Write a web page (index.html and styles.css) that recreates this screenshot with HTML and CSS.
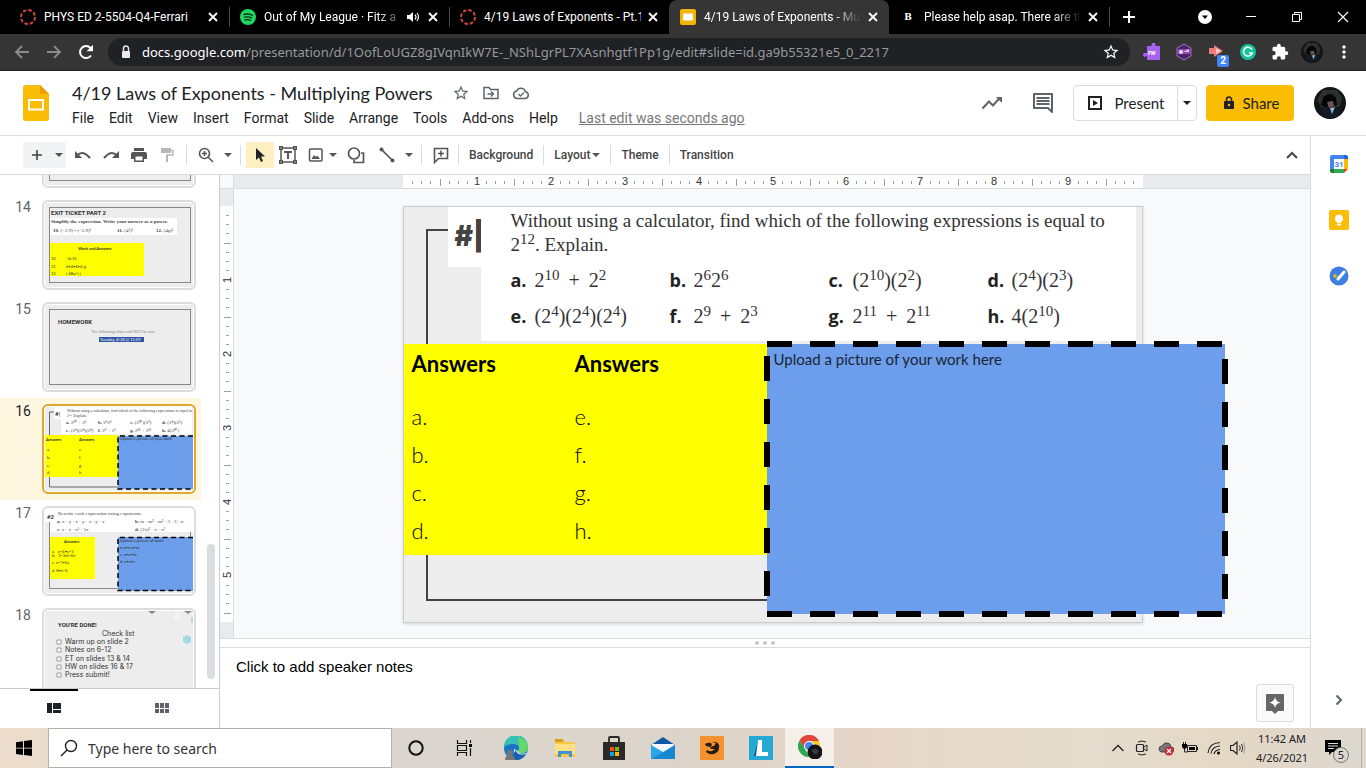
FILE: index.html
```html
<!DOCTYPE html>
<html lang="en">
<head>
<meta charset="utf-8">
<title>4/19 Laws of Exponents - Multiplying Powers</title>
<link rel="stylesheet" href="styles.css">
</head>
<body>
<svg class="defs" width="0" height="0" aria-hidden="true">
  <defs>
    <symbol id="i-x" viewBox="0 0 16 16"><path d="M4 4l8 8M12 4l-8 8" stroke="currentColor" stroke-width="1.8" fill="none"/></symbol>
    <symbol id="i-caret" viewBox="0 0 8 4"><path d="M0 0h8L4 4z" fill="currentColor"/></symbol>
    <symbol id="i-ring" viewBox="0 0 16 16"><circle cx="8" cy="8" r="7" fill="none" stroke="#d0473c" stroke-width="2" stroke-dasharray="3.6 1.9"/></symbol>
    <symbol id="i-star" viewBox="0 0 24 24"><path fill="currentColor" d="M22 9.24l-7.19-.62L12 2 9.19 8.63 2 9.24l5.46 4.73L5.82 21 12 17.27 18.18 21l-1.63-7.03L22 9.24zM12 15.4l-3.76 2.27 1-4.28-3.32-2.88 4.38-.38L12 6.1l1.71 4.04 4.38.38-3.32 2.88 1 4.28L12 15.4z"/></symbol>
    <symbol id="i-avatar" viewBox="0 0 32 32"><circle cx="16" cy="16" r="16" fill="#141416"/><path d="M9 3h14l5 8-2 9H7l-4-7z" fill="#2a312f"/><path d="M9 11q7-8 13 0l1 7-12 2-4-2z" fill="#050507"/><path d="M13 15l6-1 1 5-5 2z" fill="#6a5653"/><path d="M7 20l8 1 5-2 6 4-2 6-9 3-7-3z" fill="#141a28"/><path d="M16 21l5-1-3 7z" fill="#8fb6d6"/></symbol>
    <pattern id="h-ticks" width="74" height="14" patternUnits="userSpaceOnUse"><path d="M9.5 6v3M18.500 6v3M27.500 6v3M46.500 6v3M55.500 6v3M64.500 6v3" stroke="#9aa0a6"/><path d="M37.500 4v7" stroke="#9aa0a6"/></pattern>
    <pattern id="v-ticks" width="14" height="74" patternUnits="userSpaceOnUse"><path d="M6 9.500h3M6 18.500h3M6 27.500h3M6 46.500h3M6 55.500h3M6 64.500h3" stroke="#9aa0a6"/><path d="M4 37.500h7" stroke="#9aa0a6"/></pattern>
  </defs>
</svg>

<header class="browser">
  <div class="tabstrip">
    <div class="tab"><svg class="i16"><use href="#i-ring"/></svg><span class="tab-title">PHYS ED 2-5504-Q4-Ferrari</span><button class="tab-close" aria-label="Close tab"><svg class="i16"><use href="#i-x"/></svg></button></div>
    <div class="tab divided"><svg class="i16" viewBox="0 0 16 16"><circle cx="8" cy="8" r="8" fill="#1ed760"/><path d="M3.500 5.500q5-1.500 9.500 1M4 8.300q4-1.200 8 .8M4.500 11q3.500-1 6.500.7" fill="none" stroke="#0b2a15" stroke-width="1.400"/></svg><span class="tab-title fade">Out of My League · Fitz a</span><svg class="i16" viewBox="0 0 16 16"><path d="M2 6h2.500L8 3v10L4.500 10H2z" fill="#fff"/><path d="M10 5.500q2 2.500 0 5M12 4q3 4 0 8" stroke="#fff" fill="none" stroke-width="1.200"/></svg><button class="tab-close" aria-label="Close tab"><svg class="i16"><use href="#i-x"/></svg></button></div>
    <div class="tab divided"><svg class="i16"><use href="#i-ring"/></svg><span class="tab-title">4/19 Laws of Exponents - Pt.1</span><button class="tab-close" aria-label="Close tab"><svg class="i16"><use href="#i-x"/></svg></button></div>
    <div class="tab active"><svg class="i16" viewBox="0 0 16 16"><rect y="0" width="16" height="16" rx="2" fill="#f4b400"/><rect x="3" y="4.500" width="10" height="7" fill="#fff"/></svg><span class="tab-title fade">4/19 Laws of Exponents - Mu</span><button class="tab-close" aria-label="Close tab"><svg class="i16"><use href="#i-x"/></svg></button></div>
    <div class="tab"><span class="fav-b">B</span><span class="tab-title fade">Please help asap. There are th</span><button class="tab-close" aria-label="Close tab"><svg class="i16"><use href="#i-x"/></svg></button></div>
    <button class="new-tab" aria-label="New tab"><svg class="i16" viewBox="0 0 16 16"><path d="M8 2v12M2 8h12" stroke="#fff" stroke-width="2"/></svg></button>
    <div class="window-buttons">
      <button aria-label="Tab search"><svg class="i16" viewBox="0 0 16 16"><circle cx="8" cy="8" r="7" fill="#fff"/><path d="M5 6.500h6L8 10z"/></svg></button>
      <button aria-label="Minimize"><svg class="i16" viewBox="0 0 16 16"><path d="M3 7.500h10" stroke="#fff"/></svg></button>
      <button aria-label="Restore"><svg class="i16" viewBox="0 0 16 16"><path d="M3.500 5.500h7v7h-7zM5.500 5.500v-2h7v7h-2" stroke="#fff" fill="none"/></svg></button>
      <button aria-label="Close"><svg class="i16" viewBox="0 0 16 16"><path d="M3 3l10 10M13 3L3 13" stroke="#fff" stroke-width="1.200"/></svg></button>
    </div>
  </div>
  <div class="addressbar">
    <button aria-label="Back"><svg class="i16" viewBox="0 0 16 16"><path d="M15 8H2M8 2L2 8l6 6" stroke="#8b8b8b" fill="none" stroke-width="1.800"/></svg></button>
    <button aria-label="Forward"><svg class="i16" viewBox="0 0 16 16"><path d="M1 8h13M8 2l6 6-6 6" stroke="#8b8b8b" fill="none" stroke-width="1.800"/></svg></button>
    <button aria-label="Reload"><svg class="i16" viewBox="0 0 16 16"><path d="M13 11.500A6 6 0 1 1 12.500 4" stroke="#fff" fill="none" stroke-width="2"/><path d="M15 .8v6.400H8.600z" fill="#fff"/></svg></button>
    <div class="omnibox">
      <svg class="i16" viewBox="0 0 16 16"><rect x="4" y="7" width="8" height="7" rx="1" fill="#e8eaed"/><path d="M5.500 7V4.500a2.500 2.500 0 0 1 5 0V7" stroke="#e8eaed" stroke-width="1.500" fill="none"/></svg>
      <span class="url"><b>docs.google.com</b>/presentation/d/1OofLoUGZ8gIVqnIkW7E-_NShLgrPL7XAsnhgtf1Pp1g/edit#slide=id.ga9b55321e5_0_2217</span>
      <button class="bookmark" aria-label="Bookmark"><svg class="i18"><use href="#i-star"/></svg></button>
    </div>
    <div class="extensions">
      <button aria-label="Read Write"><svg class="i18" viewBox="0 0 18 18"><path d="M4 3h5a2 2 0 1 1 3 0h5v14H4v-5a2 2 0 1 1-3-2h3z" fill="#a463f2"/><text x="5" y="12" class="rw">rw</text></svg></button>
      <button aria-label="Extension"><svg class="i18" viewBox="0 0 18 18"><path d="M9 1l7 4v8l-7 4-7-4V5z" fill="#4c2467" stroke="#a86bc9"/><path d="M2.500 6h13v5h-13z" fill="#8a4fae"/><circle cx="6" cy="9" r="2" fill="#f0d9fa"/><path d="M8 9l6-3v3z" fill="#e3bff5"/></svg></button>
      <button class="has-badge" aria-label="Extension, 2 alerts"><svg class="i18" viewBox="0 0 18 18"><path d="M2 5h5V2l9 6-9 6v-3H2z" fill="#ee7c78"/><path d="M9 5l5 3-5 3z" fill="#fff" opacity=".6"/></svg><span class="badge">2</span></button>
      <button aria-label="Grammarly"><svg class="i18" viewBox="0 0 18 18"><circle cx="9" cy="9" r="8" fill="#15c39a"/><path d="M13 6.500A4.500 4.500 0 1 0 13.300 10H10" fill="none" stroke="#fff" stroke-width="1.600"/></svg></button>
      <button aria-label="Extensions"><svg class="i18" viewBox="0 0 24 24"><path fill="#fff" d="M20.500 11H19V7a2 2 0 0 0-2-2h-4V3.500a2.500 2.500 0 0 0-5 0V5H4a2 2 0 0 0-2 2v3.800h1.500a2.700 2.700 0 0 1 0 5.400H2V20a2 2 0 0 0 2 2h3.800v-1.500a2.700 2.700 0 0 1 5.400 0V22H17a2 2 0 0 0 2-2v-4h1.500a2.500 2.500 0 0 0 0-5z"/></svg></button>
      <button aria-label="Profile"><svg class="i22"><use href="#i-avatar"/></svg></button>
      <button aria-label="Menu"><svg class="i16" viewBox="0 0 16 16"><g fill="#fff"><circle cx="8" cy="3" r="1.700"/><circle cx="8" cy="8" r="1.700"/><circle cx="8" cy="13" r="1.700"/></g></svg></button>
    </div>
  </div>
</header>

<section class="docbar">
  <svg class="logo" viewBox="0 0 26 36"><path d="M3 0h14l9 9v24a3 3 0 0 1-3 3H3a3 3 0 0 1-3-3V3a3 3 0 0 1 3-3z" fill="#fbbc04"/><path d="M17 0l9 9h-9z" fill="#e8a100"/><rect x="6" y="15" width="14" height="9.500" fill="none" stroke="#fff" stroke-width="2"/></svg>
  <div class="doc-meta">
    <div class="title-row">
      <h1>4/19 Laws of Exponents - Multiplying Powers</h1>
      <button aria-label="Star"><svg class="i18"><use href="#i-star"/></svg></button>
      <button aria-label="Move"><svg class="i18" viewBox="0 0 18 18"><path d="M2 14.500V3.500h5l1.500 2H16v9z" fill="none" stroke="#5f6368" stroke-width="1.500"/><path d="M5.500 10h6M9 7.500l2.500 2.500L9 12.500" fill="none" stroke="#5f6368" stroke-width="1.400"/></svg></button>
      <button aria-label="Saved to Drive"><svg class="i18" viewBox="0 0 18 18"><path d="M5 14.500a3.800 3.800 0 0 1-.3-7.500 4.600 4.600 0 0 1 8.700.8A3.400 3.400 0 0 1 13.500 14.500z" fill="none" stroke="#5f6368" stroke-width="1.500"/><path d="M6.500 10l2 2 3.500-3.500" fill="none" stroke="#5f6368" stroke-width="1.300"/></svg></button>
    </div>
    <nav class="menus">
      <button>File</button><button>Edit</button><button>View</button><button>Insert</button><button>Format</button><button>Slide</button><button>Arrange</button><button>Tools</button><button>Add-ons</button><button>Help</button>
      <a href="#history">Last edit was seconds ago</a>
    </nav>
  </div>
  <div class="doc-actions">
    <button class="plain" aria-label="Activity"><svg class="i24" viewBox="0 0 24 24"><path d="M2.500 17.500l6.500-7 4 4 7-8" fill="none" stroke="#5f6368" stroke-width="2"/><path d="M16 6h6v6z" fill="#5f6368"/></svg></button>
    <button class="plain comments" aria-label="Comments"><svg class="i24" viewBox="0 0 24 24"><path d="M3 3h18v18l-4-4H3z" fill="none" stroke="#5f6368" stroke-width="2" stroke-linejoin="round"/><path d="M5.500 7h13M5.500 10h13M5.500 13h13" stroke="#5f6368" stroke-width="2"/></svg></button>
    <div class="present">
      <button class="present-main"><svg class="i16" viewBox="0 0 16 16"><rect x="2" y="2" width="12" height="12" fill="none" stroke="#202124" stroke-width="2"/><path d="M6 5l5 3-5 3z" fill="#202124"/></svg>Present</button>
      <button class="present-more" aria-label="Present options"><svg class="caret"><use href="#i-caret"/></svg></button>
    </div>
    <button class="share"><svg class="i16" viewBox="0 0 16 16"><rect x="3" y="6" width="10" height="8" rx="1" fill="#202124"/><path d="M5.500 6V4.500a2.500 2.500 0 0 1 5 0V6" stroke="#202124" stroke-width="1.600" fill="none"/><circle cx="8" cy="10" r="1.200" fill="#fbbc04"/></svg>Share</button>
    <button class="plain account" aria-label="Account"><svg class="i32"><use href="#i-avatar"/></svg></button>
  </div>
</section>

<div class="body">
  <div class="main">
    <div class="toolbar">
      <button class="tinted" aria-label="New slide"><svg class="i18" viewBox="0 0 18 18"><path d="M9 4v10M4 9h10" stroke="#444" stroke-width="1.600"/></svg></button>
      <button class="drop tinted" aria-label="Slide layouts"><svg class="caret"><use href="#i-caret"/></svg></button>
      <button class="lead" aria-label="Undo"><svg class="i18" viewBox="0 0 18 18"><path d="M3 9.500q6-6 13 2.500" fill="none" stroke="#555" stroke-width="2"/><path d="M1 5v7h7z" fill="#555"/></svg></button>
      <button aria-label="Redo"><svg class="i18" viewBox="0 0 18 18"><path d="M15 9.500q-6-6-13 2.500" fill="none" stroke="#555" stroke-width="2"/><path d="M17 5v7h-7z" fill="#555"/></svg></button>
      <button aria-label="Print"><svg class="i18" viewBox="0 0 18 18"><path d="M4 2h10v3H4zM3 6h12a2 2 0 0 1 2 2v5h-3v3H4v-3H1V8a2 2 0 0 1 2-2z" fill="#555"/><path d="M5.500 10.500h7v4h-7z" fill="#fff"/></svg></button>
      <button aria-label="Paint format"><svg class="i18" viewBox="0 0 18 18"><path d="M3 2h10v5H3zM8 10h2v6H8z" fill="#b7b7b7"/><path d="M13 4.500h2V9H9v2" fill="none" stroke="#b7b7b7" stroke-width="1.500"/></svg></button>
      <span class="sep"></span>
      <button aria-label="Zoom"><svg class="i18" viewBox="0 0 18 18"><circle cx="7.500" cy="7.500" r="5" fill="none" stroke="#555" stroke-width="1.600"/><path d="M11 11l5 5M5 7.500h5M7.500 5v5" stroke="#555" stroke-width="1.500"/></svg></button>
      <button class="drop" aria-label="Zoom options"><svg class="caret"><use href="#i-caret"/></svg></button>
      <span class="sep"></span>
      <button class="selected" aria-label="Select"><svg class="i18" viewBox="0 0 18 18"><path d="M5 2v12l3-2.500 2 4.500 2-1-2-4.500h4z" fill="#202124"/></svg></button>
      <button aria-label="Text box"><svg class="i18" viewBox="0 0 18 18"><rect x="2" y="2" width="14" height="14" fill="none" stroke="#555" stroke-width="1.500"/><path d="M0 0h4v4H0zM14 0h4v4h-4zM0 14h4v4H0zM14 14h4v4h-4z" fill="#555"/><path d="M1.500 1.500h1v1h-1zM15.500 1.500h1v1h-1zM1.500 15.500h1v1h-1zM15.500 15.500h1v1h-1z" fill="#fff"/><path d="M5 6h8M9 6v7" stroke="#555" stroke-width="2"/></svg></button>
      <button aria-label="Image"><svg class="i18" viewBox="0 0 18 18"><rect x="2.500" y="3" width="12.500" height="12" rx="1" fill="none" stroke="#555" stroke-width="1.500"/><path d="M4.500 13l2.500-4 2 2 1.500-1.500L13 13z" fill="#555"/></svg></button>
      <button class="drop tight" aria-label="Image options"><svg class="caret"><use href="#i-caret"/></svg></button>
      <button class="shape" aria-label="Shape"><svg class="i18" viewBox="0 0 18 18"><circle cx="7" cy="7.500" r="5.500" fill="none" stroke="#555" stroke-width="1.700"/><path d="M14 7h2.500v9.500H7V14" fill="none" stroke="#555" stroke-width="1.700"/></svg></button>
      <button class="line" aria-label="Line"><svg class="i18" viewBox="0 0 18 18"><path d="M3 3l12 12" stroke="#555" stroke-width="1.700"/><circle cx="3.500" cy="3.500" r="2" fill="#555"/><circle cx="14.500" cy="14.500" r="2" fill="#555"/></svg></button>
      <button class="drop" aria-label="Line options"><svg class="caret"><use href="#i-caret"/></svg></button>
      <span class="sep"></span>
      <button aria-label="Add comment"><svg class="i18" viewBox="0 0 18 18"><path d="M2.500 2.500h13v10h-9l-4 4z" fill="none" stroke="#555" stroke-width="1.600"/><path d="M9 4.500v6M6 7.500h6" stroke="#555" stroke-width="1.600"/></svg></button>
      <div class="text-tools">
        <button>Background</button><button>Layout<svg class="caret"><use href="#i-caret"/></svg></button><button>Theme</button><button>Transition</button>
      </div>
      <button class="collapse" aria-label="Hide menus"><svg class="i18" viewBox="0 0 18 18"><path d="M4 12l5-5 5 5" stroke="#444" stroke-width="2" fill="none"/></svg></button>
    </div>

    <div class="work">
      <aside class="filmstrip">
        <div class="film-scroll">
          <ol class="thumbs">
            <li><span class="num">13</span><svg class="thumb" viewBox="0 0 150 86"><rect x="1" y="1" width="148" height="84" fill="#ededed"/><rect x="5.500" y="5.500" width="141" height="75" fill="none" stroke="#888"/></svg></li>
            <li><span class="num">14</span><svg class="thumb" viewBox="0 0 150 86"><rect x="1" y="1" width="148" height="84" fill="#ededed"/><rect x="5.500" y="5.500" width="141" height="75" fill="none" stroke="#888"/><path d="M6 16h127v17H6z" fill="#fff"/><text class="t-head" x="7" y="13">EXIT TICKET PART 2</text><text class="t-serif big bold" x="7" y="21">Simplify the expression. Write your answer as a power.</text><g class="t-serif big"><text x="9" y="30"><tspan class="bold">10.</tspan> (−2.9) • (−2.9)⁶</text><text x="73" y="30"><tspan class="bold">11.</tspan> (4²)³</text><text x="112" y="30"><tspan class="bold">12.</tspan> (4p)³</text></g><path d="M6 41h94v33H6z" fill="#ff0"/><text class="t-tiny bold" x="34" y="48">Work and Answers</text><g class="t-tiny"><text x="7" y="58">10</text><text x="22" y="58">-2e15</text><text x="7" y="66">11</text><text x="22" y="66">4•4•4•4 yj</text><text x="7" y="73">12</text><text x="22" y="73">(-48p^) j</text></g></svg></li>
            <li><span class="num">15</span><svg class="thumb" viewBox="0 0 150 86"><rect x="1" y="1" width="148" height="84" fill="#ededed"/><rect x="5.500" y="5.500" width="141" height="75" fill="none" stroke="#888"/><text class="t-head" x="14" y="20">HOMEWORK</text><text class="t-tiny gray" x="47" y="29">The following slides will NOT be due</text><path d="M55 33h45v5H55z" fill="#2f55a4"/><text class="t-tiny white" x="56" y="37">Tuesday, 4/20 @ 11:59</text></svg></li>
            <li class="current"><span class="num">16</span><svg class="thumb" viewBox="0 0 150 86"><rect x="1" y="1" width="148" height="84" fill="#ededed"/><path d="M12 6H5.500v75H75" fill="none" stroke="#666"/><path d="M10 1h138v27H17V13h-7z" fill="#fff"/><text class="t-head" x="11" y="10">#|</text><g class="t-serif"><text x="23" y="6">Without using a calculator, find which of the following expressions is equal to</text><text x="23" y="11">2¹². Explain.</text></g><g class="t-serif big"><text x="22" y="18"><tspan class="bold">a.</tspan> 2¹⁰ + 2²</text><text x="54" y="18"><tspan class="bold">b.</tspan> 2⁶2⁶</text><text x="86" y="18"><tspan class="bold">c.</tspan> (2¹⁰)(2²)</text><text x="118" y="18"><tspan class="bold">d.</tspan> (2⁴)(2³)</text><text x="22" y="26"><tspan class="bold">e.</tspan> (2⁴)(2⁴)(2⁴)</text><text x="54" y="26"><tspan class="bold">f.</tspan> 2⁹ + 2³</text><text x="86" y="26"><tspan class="bold">g.</tspan> 2¹¹ + 2¹¹</text><text x="118" y="26"><tspan class="bold">h.</tspan> 4(2¹⁰)</text></g><path d="M1 29h73v42H1z" fill="#ff0"/><g class="t-tiny"><text class="bold" x="2" y="35">Answers</text><text class="bold" x="35" y="35">Answers</text><text x="3" y="45">a.</text><text x="3" y="53">b.</text><text x="3" y="61">c.</text><text x="3" y="68">d.</text><text x="35" y="45">e.</text><text x="35" y="53">f.</text><text x="35" y="61">g.</text><text x="35" y="68">h.</text></g><path d="M149 30H74v53h75z" fill="#6d9eeb"/><path d="M149 30H74v53h75" fill="none" stroke="#000" stroke-width="1.500" stroke-dasharray="5 3.500"/><text class="t-tiny" x="76" y="34">Upload a picture of your work</text></svg></li>
            <li><span class="num">17</span><svg class="thumb" viewBox="0 0 150 86"><rect x="1" y="1" width="148" height="84" fill="#ededed"/><path d="M5.500 14v66.500h141V24" fill="none" stroke="#888"/><path d="M1 1h148v23H6V14H1z" fill="#fff"/><text class="t-head" x="3" y="11">#2</text><g class="t-serif big"><text x="14" y="7">Rewrite each expression using exponents.</text><text x="13" y="15"><tspan class="bold">a.</tspan> x · y · x · y · x · y · x</text><text x="13" y="23"><tspan class="bold">c.</tspan> x · x · x⁵ · 5x</text><text x="91" y="15"><tspan class="bold">b.</tspan> m · m² · m³ · 3 · 3 · n</text><text x="91" y="23"><tspan class="bold">d.</tspan> (2x)³ · x · x²</text></g><path d="M6 29h45v42H6z" fill="#ff0"/><g class="t-tiny"><text class="bold" x="20" y="35">Answers</text><text x="8" y="45">a.&#160; &#160;x^4•y^3</text><text x="8" y="49">b.&#160; &#160;3^2m^6n</text><text x="8" y="56">c. x^7•5x</text><text x="8" y="64">d. 8•x^6</text></g><path d="M149 29H74v54h75z" fill="#6d9eeb"/><path d="M149 29.500H74v53h75" fill="none" stroke="#000" stroke-width="1.500" stroke-dasharray="5 3.500"/><g class="t-tiny"><text x="76" y="34">Upload a picture of work</text><text x="76" y="41">x-y•x-y•xy</text><text x="76" y="48">c. x•x•5x</text><text x="76" y="55">d. x•x•x</text></g></svg></li>
            <li><span class="num">18</span><svg class="thumb" viewBox="0 0 150 86"><rect x="1" y="1" width="148" height="84" fill="#ededed"/><text class="t-head" x="14" y="17">YOU'RE DONE!</text><g class="t-check"><text x="58" y="26">Check list</text><text x="21" y="34">Warm up on slide 2</text><text x="21" y="42">Notes on 6-12</text><text x="21" y="51">ET on slides 13 &amp; 14</text><text x="21" y="59">HW on slides 16 &amp; 17</text><text x="21" y="67">Press submit!</text></g><path d="M13 30v4h4v-4zM13 38v4h4v-4zM13 47v4h4v-4zM13 55v4h4v-4zM13 63v4h4v-4z" fill="#fff" stroke="#666" stroke-width=".6"/><path d="M104 1h8l-4 3zM140 1h8l-4 3z" fill="#888"/><path d="M143 25l4 2v5l-4 2-4-2v-5z" fill="#a6d8e3"/><circle cx="133" cy="7" r="3" fill="#f5f5f5"/><path d="M148 7v6" stroke="#8cc8c8"/></svg></li>
          </ol>
          <span class="scroll-thumb"></span>
        </div>
        <div class="film-views">
          <button class="on" aria-label="Filmstrip view"><svg class="i16" viewBox="0 0 16 16"><path d="M1 3h5v10H1zM7 3h8v6H7zM7 10h8v3H7z" fill="#202124"/></svg></button>
          <button aria-label="Grid view"><svg class="i16" viewBox="0 0 16 16"><path d="M1 3h4v5H1zM6 3h4v5H6zM11 3h4v5h-4zM1 9h4v4H1zM6 9h4v4H6zM11 9h4v4h-4z" fill="#5f6368"/></svg></button>
        </div>
      </aside>

      <section class="editor">
        <div class="stage">
          <div class="corner"></div>
          <div class="h-ruler"><svg width="740" height="13"><rect width="740" height="13" fill="#fff"/><rect width="740" height="13" fill="url(#h-ticks)"/><g class="ruler-num"><text x="74" y="10">1</text><text x="148" y="10">2</text><text x="222" y="10">3</text><text x="296" y="10">4</text><text x="370" y="10">5</text><text x="443" y="10">6</text><text x="517" y="10">7</text><text x="591" y="10">8</text><text x="665" y="10">9</text></g></svg></div>
          <div class="v-ruler"><svg width="13" height="416"><rect width="13" height="416" fill="#fff"/><rect width="13" height="416" fill="url(#v-ticks)"/><g class="ruler-num"><text transform="translate(11 74) rotate(-90)">1</text><text transform="translate(11 148) rotate(-90)">2</text><text transform="translate(11 222) rotate(-90)">3</text><text transform="translate(11 296) rotate(-90)">4</text><text transform="translate(11 369) rotate(-90)">5</text></g></svg></div>
          <div class="canvas">
            <div class="slide">
              <div class="slide-frame"></div>
              <div class="slide-tag">#|</div>
              <div class="problem">
                <p>Without using a calculator, find which of the following expressions is equal to<br>2<sup>12</sup>. Explain.</p>
                <div class="choices">
                  <span><b>a.</b>2<sup>10</sup><i>+</i>2<sup>2</sup></span><span><b>b.</b>2<sup>6</sup>2<sup>6</sup></span><span><b>c.</b>(2<sup>10</sup>)(2<sup>2</sup>)</span><span><b>d.</b>(2<sup>4</sup>)(2<sup>3</sup>)</span>
                  <span><b>e.</b>(2<sup>4</sup>)(2<sup>4</sup>)(2<sup>4</sup>)</span><span><b>f.</b>2<sup>9</sup><i>+</i>2<sup>3</sup></span><span><b>g.</b>2<sup>11</sup><i>+</i>2<sup>11</sup></span><span><b>h.</b>4(2<sup>10</sup>)</span>
                </div>
              </div>
              <div class="answers">
                <div><h2>Answers</h2><p>a.</p><p>b.</p><p>c.</p><p>d.</p></div>
                <div><h2>Answers</h2><p>e.</p><p>f.</p><p>g.</p><p>h.</p></div>
              </div>
              <div class="upload">
                <svg class="dashes" width="458" height="270"><rect width="458" height="270" fill="none" stroke="#000" stroke-width="6" stroke-dasharray="25 18"/></svg>
                <p>Upload a picture of your work here</p>
              </div>
            </div>
          </div>
        </div>
        <div class="splitter"><i></i><i></i><i></i></div>
        <div class="notes">
          <p>Click to add speaker notes</p>
          <button class="explore" aria-label="Explore"><svg class="i22" viewBox="0 0 22 22"><path d="M3 2h16a1 1 0 0 1 1 1v15a1 1 0 0 1-1 1h-5l-3 3-3-3H3a1 1 0 0 1-1-1V3a1 1 0 0 1 1-1z" fill="#666"/><path d="M11 5q1 5 6 5.500-5 .5-6 5.500-1-5-6-5.500 5-.5 6-5.500z" fill="#fff"/></svg></button>
        </div>
      </section>
    </div>
  </div>

  <aside class="sidepanel">
    <button aria-label="Calendar"><svg class="i20" viewBox="0 0 20 20"><path d="M1 3a2 2 0 0 1 2-2h12v4H5v10H1z" fill="#4285f4"/><path d="M15 1h2a2 2 0 0 1 2 2v2h-4z" fill="#1967d2"/><path d="M15 5h4v10h-4z" fill="#fbbc04"/><path d="M5 15h10v4H5z" fill="#34a853"/><path d="M1 15h4v4H3a2 2 0 0 1-2-2z" fill="#188038"/><path d="M15 15h4l-4 4z" fill="#ea4335"/><rect x="5" y="5" width="10" height="10" fill="#fff"/><text x="10" y="13" class="cal">31</text></svg></button>
    <button aria-label="Keep"><svg class="i20" viewBox="0 0 20 20"><rect width="20" height="20" rx="2" fill="#fbbc04"/><path d="M10 4.500a4 4 0 0 1 2 7.500v1.200H8V12a4 4 0 0 1 2-7.500zM8 14h4v1.500H8z" fill="#fff"/></svg></button>
    <button aria-label="Tasks"><svg class="i20" viewBox="0 0 20 20"><circle cx="10" cy="10" r="9.500" fill="#3f7de0"/><path d="M9 13l6-7" stroke="#fff" stroke-width="3" stroke-linecap="round"/><circle cx="6" cy="10" r="1.800" fill="#fbbc04"/></svg></button>
    <button class="expand" aria-label="Hide side panel"><svg class="i16" viewBox="0 0 16 16"><path d="M5.500 3.500L10 8l-4.500 4.500" stroke="#5f6368" stroke-width="2" fill="none"/></svg></button>
  </aside>
</div>

<footer class="taskbar">
  <button class="start" aria-label="Start"><svg class="i16" viewBox="0 0 16 16"><path d="M0 2.200l7-1v6.500H0zM8 1.100L16 0v7.700H8zM0 8.600h7v6.400l-7-1zM8 8.600h8V16l-8-1.100z"/></svg></button>
  <label class="search"><svg class="i18" viewBox="0 0 18 18"><circle cx="11" cy="7" r="5.500" fill="none" stroke="#222" stroke-width="1.400"/><path d="M7 11l-6 6" stroke="#222" stroke-width="1.500"/></svg><input type="text" placeholder="Type here to search" aria-label="Search"></label>
  <button class="sys" aria-label="Cortana"><svg class="i16" viewBox="0 0 16 16"><circle cx="8" cy="8" r="6.700" fill="none" stroke="#111" stroke-width="2"/></svg></button>
  <button class="sys" aria-label="Task view"><svg class="i16" viewBox="0 0 16 16"><path d="M1.500 0v3.500h9V0M1.500 16v-3.500h9V16M1.500 5.500h9v5h-9zM14.500 0v3M14.500 8v8" fill="none" stroke="#111" stroke-width="1.200"/><path d="M13 4h3v3h-3z"/></svg></button>
  <div class="apps">
    <button aria-label="Edge"><svg class="i24" viewBox="0 0 24 24"><circle cx="12" cy="12" r="12" fill="#1b74c5"/><path d="M0 11A12 12 0 0 1 24 11q0 6-6 6-4 0-4-2 2-2 1-4-1-3-6-3-6 0-9 3z" fill="#35c1b5"/><path d="M14 1q10 3 10 10 0 6-6 6-4 0-4-2 2-2 1-4z" fill="#62d86b"/><path d="M14 15q1 4 9 2-4 5-8 6-6-3-5-10z" fill="#e4edf5"/><path d="M12 14q1 6 10 4-4 6-10 6-5-4 0-10z" fill="#1a5fb0"/><circle cx="6" cy="17" r="3" fill="#777"/><path d="M1 24q0-5 5-5t5 5z" fill="#777"/></svg></button>
    <button aria-label="File Explorer"><svg class="i24" viewBox="0 0 24 24"><path d="M2 3h8l2 3h10v15H2z" fill="#f6c744"/><path d="M2 3h8v3H2z" fill="#d9a119"/><path d="M2 8h20v10H2z" fill="#ffe083"/><path d="M5 21v-6h14v6h-3v-3H8v3z" fill="#3f93d2"/></svg></button>
    <button aria-label="Microsoft Store"><svg class="i24" viewBox="0 0 24 24"><path d="M1 6h22v18H1z" fill="#292929"/><path d="M7 6V2q0-1 1-1h8q1 0 1 1v4" fill="none" stroke="#292929" stroke-width="1.800"/><path d="M8 11h4v4H8z" fill="#f25022"/><path d="M13 11h4v4h-4z" fill="#7fba00"/><path d="M8 16h4v4H8z" fill="#00a4ef"/><path d="M13 16h4v4h-4z" fill="#ffb900"/></svg></button>
    <button aria-label="Mail"><svg class="i24" viewBox="0 0 24 24"><path d="M0 9l12-8 12 8v4H0z" fill="#0f58a8"/><path d="M1 8h22v3l-11 7-11-7z" fill="#f4f8fc"/><path d="M0 9l12 7 12-7v14H0z" fill="#29a5e8"/><path d="M0 23l13-7 11-7v14z" fill="#1787d0"/></svg></button>
    <button aria-label="Game"><svg class="i24" viewBox="0 0 24 24"><rect width="24" height="24" fill="#f3922e"/><path d="M5 8q3-2 6-1l1 2-2 2-4-1zM12 6q5-1 7 3 1 5-3 8-5 3-10-1l1-2q3 2 5 1l3-2-4 0-1-2 4-1 2-3z" fill="#2b1a10"/></svg></button>
    <button aria-label="L app"><svg class="i24" viewBox="0 0 24 24"><rect width="24" height="24" fill="#25a8d3"/><path d="M9 4L5 20h3z" fill="#17596f"/><path d="M9 4h4v12h6v4H7z" fill="#fff"/></svg></button>
    <button class="running" aria-label="Chrome"><svg class="i24" viewBox="0 0 24 24"><circle cx="11" cy="11" r="11" fill="#eceff1"/><path d="M1.500 5.500A11 11 0 0 1 21 6H11L6 13z" fill="#e0463a"/><path d="M1.500 5.500L7 14l5 8A11 11 0 0 1 1.500 5.500z" fill="#2da94f"/><path d="M21 6a11 11 0 0 1-9 16l4-11-3-5z" fill="#fdc92c"/><circle cx="11" cy="11" r="5" fill="#fff"/><circle cx="11" cy="11" r="4" fill="#4285f4"/><circle cx="17" cy="17" r="7.500" fill="#141417"/><path d="M13 16l4-3 4 3-3 4z" fill="#363b40"/></svg></button>
  </div>
  <div class="tray">
    <button aria-label="Show hidden icons"><svg class="i16" viewBox="0 0 16 16"><path d="M2.500 11L8 5.500l5.500 5.500" fill="none" stroke="#222" stroke-width="1.300"/></svg></button>
    <button aria-label="Meet Now"><svg class="i16" viewBox="0 0 16 16"><rect x="2.500" y="4.500" width="7" height="7" rx="1" fill="none" stroke="#222" stroke-width="1.200"/><path d="M10 7l3-2v6l-3-2M4 2q4-2 8 0M4 14q4 2 8 0" fill="none" stroke="#222"/></svg></button>
    <button aria-label="OneDrive"><svg class="i16" viewBox="0 0 16 16"><path d="M1 9q0-3 3-3 2-4 6-3 3 1 3 4 3 0 3 3 0 2-3 2H3q-2-1-2-3z" fill="#777" stroke="#333" stroke-width=".8"/><circle cx="11" cy="11" r="4.500" fill="#c92a38"/><path d="M9 9l4 4M13 9l-4 4" stroke="#fff" stroke-width="1.200"/></svg></button>
    <button aria-label="Battery"><svg class="i16" viewBox="0 0 16 16"><path d="M5.500 5.500h9v6h-9z" fill="none" stroke="#222"/><path d="M7 7h6v3H7zM15 7h1v3h-1zM0 4h5v3q-1 2-2.500 2T0 7z"/><path d="M1.500 2v2M3.500 2v2M2.500 9v3h3" fill="none" stroke="#222"/></svg></button>
    <button aria-label="Wi-Fi"><svg class="i16" viewBox="0 0 16 16"><path d="M2 13Q3 3 14 2.500M5 13.500Q6 6.500 14 6M8 14Q9 10 14 9.500" fill="none" stroke="#222" stroke-width="1.200"/><circle cx="12.500" cy="13" r="1.500"/></svg></button>
    <button aria-label="Volume"><svg class="i16" viewBox="0 0 16 16"><path d="M.5 5.500h2.500L7 2v12l-4-3.500H.5z" fill="none" stroke="#222" stroke-width="1.200"/><path d="M9.500 5.500q1.500 2.500 0 5M11.500 4q2.500 4 0 8" fill="none" stroke="#333"/><path d="M13.500 2.500q3 5.500 0 11" fill="none" stroke="#999"/></svg></button>
    <div class="clock"><span>11:42 AM</span><span>4/26/2021</span></div>
    <button class="notify" aria-label="Notifications, 5 new"><svg class="i18" viewBox="0 0 18 18"><path d="M1 1h16v12H8l-3 3v-3H1z"/><path d="M4 4.500h10M4 7h10M4 9.500h6" stroke="#ddd"/></svg><span class="count">5</span></button>
  </div>
</footer>
</body>
</html>
```
FILE: styles.css
```css
* { box-sizing: border-box; }

body {
  margin: 0;
  height: 100vh;
  display: flex;
  flex-direction: column;
  overflow: hidden;
  background: #fff;
  color: #202124;
  font-family: Roboto, sans-serif;
}

button {
  margin: 0;
  padding: 0;
  border: 0;
  background: none;
  color: inherit;
  font: inherit;
  display: flex;
  align-items: center;
  justify-content: center;
}

svg { display: block; flex: none; }
h1, h2, p, ol { margin: 0; padding: 0; font-weight: normal; }

.defs { position: absolute; }
.i16 { width: 16px; height: 16px; }
.i18 { width: 18px; height: 18px; }
.i20 { width: 20px; height: 20px; }
.i22 { width: 22px; height: 22px; }
.i24 { width: 24px; height: 24px; }
.i32 { width: 32px; height: 32px; }
.caret { width: 8px; height: 4px; color: #555; }
.bold { font-weight: bold; }

/* Browser frame */
.tabstrip {
  height: 34px;
  display: flex;
  align-items: center;
  padding-left: 9px;
  background: #000;
  color: #fff;
  font: 12px Roboto, sans-serif;
}
.tab {
  flex: 0 1 220px;
  min-width: 0;
  height: 34px;
  padding: 0 8px 0 11px;
  display: flex;
  align-items: center;
  border-radius: 8px 8px 0 0;
}
.tab.divided { background: linear-gradient(#4a4a4a, #4a4a4a) left center / 1px 20px no-repeat; }
.tab.active { background: #353535; }
.tab-title { flex: 1; min-width: 0; margin-left: 8px; overflow: hidden; white-space: nowrap; }
.tab-title.fade { mask-image: linear-gradient(to left, transparent, #000 28px); }
.tab-close { margin-left: 4px; }
.fav-b { width: 16px; text-align: center; font: bold 9px/16px "DejaVu Serif", serif; }
.new-tab {
  width: 40px;
  height: 34px;
  background: linear-gradient(#4a4a4a, #4a4a4a) left center / 1px 20px no-repeat;
}
.window-buttons { margin-left: auto; display: flex; }
.window-buttons button { width: 46px; height: 30px; }

.addressbar {
  height: 37px;
  display: flex;
  align-items: center;
  padding: 0 6px;
  background: #353535;
  border-bottom: 1px solid #222;
  color: #fff;
}
.addressbar > button { width: 32px; height: 28px; }
.omnibox {
  flex: 1;
  min-width: 0;
  height: 28px;
  margin: 0 6px;
  padding: 0 10px;
  display: flex;
  align-items: center;
  gap: 8px;
  border-radius: 14px;
  background: #202124;
}
.url {
  flex: 1;
  min-width: 0;
  overflow: hidden;
  white-space: nowrap;
  color: #96999d;
  font: 13px "Noto Sans", sans-serif;
}
.url b { color: #fff; font-weight: normal; }
.extensions { display: flex; }
.extensions button { width: 32px; height: 28px; position: relative; }
.rw { fill: #fff; font: bold 7px Roboto, sans-serif; }
.badge {
  position: absolute;
  right: 3px;
  bottom: -1px;
  width: 12px;
  height: 12px;
  border-radius: 2px;
  background: #4285f4;
  color: #fff;
  font: bold 10px/12px Roboto, sans-serif;
}

/* Document header */
.docbar {
  height: 65px;
  flex: none;
  display: flex;
  align-items: center;
  padding: 0 20px 0 23px;
  border-bottom: 1px solid #dadce0;
}
.logo { width: 26px; height: 36px; }
.doc-meta { padding: 4px 0 0 23px; }
.title-row { height: 26px; display: flex; align-items: center; gap: 12px; }
.title-row h1 { margin-right: 7px; font: 18px/26px Lato, sans-serif; white-space: nowrap; }
.title-row button { color: #5f6368; }
.menus { height: 24px; display: flex; align-items: center; gap: 15px; font-size: 14px; white-space: nowrap; }
.menus a { margin-left: 6px; color: #777; }
.doc-actions { margin-left: auto; display: flex; align-items: center; }
.doc-actions > .plain { width: 32px; margin-right: 19px; }
.doc-actions > .comments { margin-right: 14px; }
.doc-actions > .account { margin: 0 0 0 20px; }
.present {
  height: 36px;
  margin-right: 9px;
  display: flex;
  border: 1px solid #dadce0;
  border-radius: 4px;
  font: 15px Lato, sans-serif;
}
.present-main { width: 103px; gap: 12px; }
.present-more { width: 19px; border-left: 1px solid #dadce0; }
.present-more .caret { color: #202124; }
.share {
  width: 88px;
  height: 36px;
  gap: 6px;
  border-radius: 4px;
  background: #fbbc04;
  font: 15px Lato, sans-serif;
}

/* Body */
.body { flex: 1; min-height: 0; display: flex; }
.main { flex: 1; min-width: 0; display: flex; flex-direction: column; }

.toolbar {
  height: 39px;
  flex: none;
  display: flex;
  align-items: center;
  padding: 0 4px 0 23px;
  border-bottom: 1px solid #dadce0;
}
.toolbar > button { width: 28px; height: 26px; flex: none; }
.toolbar > .drop { width: 15px; }
.toolbar > .tinted { background: #f1f3f4; }
.toolbar > .lead { margin-left: 3px; }
.toolbar > .tight { margin-left: -5px; }
.toolbar > .shape { margin-left: 2px; }
.toolbar > .line { margin-left: 3px; }
.toolbar > .selected { background: #feefc3; }
.toolbar > .collapse { margin-left: auto; }
.sep { width: 1px; height: 20px; margin: 0 5px; background: #dadce0; }
.text-tools { margin-left: 3px; display: flex; font-size: 12px; font-weight: 500; color: #444; }
.text-tools button { height: 20px; padding: 0 10px; border-left: 1px solid #dadce0; gap: 2px; }

.work { flex: 1; min-height: 0; display: flex; }

.filmstrip {
  width: 220px;
  flex: none;
  display: flex;
  flex-direction: column;
  border-right: 1px solid #c9ccd1;
}
.film-scroll { flex: 1; min-height: 0; overflow: hidden; position: relative; }
.thumbs { margin-top: -83px; list-style: none; }
.thumbs li {
  height: 102px;
  width: 201px;
  padding: 6px 5px 6px 0;
  display: flex;
  justify-content: space-between;
}
.thumbs .current { background: #fef7e0; }
.num { width: 31px; text-align: right; font-size: 14px; line-height: 14px; color: #5f6368; }
.current .num { color: #202124; }
.thumb { width: 154px; height: 90px; border: 2px solid #dadce0; border-radius: 6px; background: #fff; }
.current .thumb { border-color: #e0a82e; }
.t-head { font: bold 6px Roboto, sans-serif; fill: #333; }
.t-serif { font-family: "Liberation Serif", serif; font-size: 4px; fill: #444; }
.t-serif.big { font-size: 5px; }
.t-tiny { font-family: Lato, sans-serif; font-size: 4px; fill: #333; }
.t-tiny.gray { fill: #888; }
.t-tiny.white { fill: #fff; }
.t-check { font-family: Inter, sans-serif; font-size: 7px; fill: #333; }
.scroll-thumb {
  position: absolute;
  right: 4px;
  bottom: 9px;
  width: 8px;
  height: 135px;
  border-radius: 4px;
  background: #dadce0;
}
.film-views {
  height: 40px;
  flex: none;
  display: flex;
  justify-content: center;
  gap: 60px;
  padding-right: 3px;
  border-top: 1px solid #c9ccd1;
}
.film-views button { width: 48px; padding-bottom: 2px; }
.film-views .on { border-top: 2px solid #000; padding-bottom: 4px; }

.editor { flex: 1; min-width: 0; display: flex; flex-direction: column; }
.stage {
  flex: 1;
  min-height: 0;
  display: grid;
  grid-template: 14px 1fr / 14px 1fr;
  background: #f8f9fa;
}
.corner { border: solid #dadce0; border-width: 0 1px 1px 0; }
.h-ruler {
  min-width: 0;
  padding-left: 1px;
  display: flex;
  justify-content: center;
  overflow: hidden;
  background: #e8eaed;
  border-bottom: 1px solid #dadce0;
}
.v-ruler {
  min-height: 0;
  padding-top: 1px;
  display: flex;
  align-items: center;
  overflow: hidden;
  background: #e8eaed;
  border-right: 1px solid #dadce0;
}
.ruler-num {
  font: 11px "Liberation Sans", sans-serif;
  fill: #333;
  text-anchor: middle;
  stroke: #fff;
  stroke-width: 4px;
  paint-order: stroke;
}
.canvas {
  min-width: 0;
  min-height: 0;
  padding: 1px 0 0 1px;
  display: flex;
  align-items: center;
  justify-content: center;
  overflow: hidden;
}

/* Slide objects sit at free positions on the slide */
.slide {
  position: relative;
  width: 740px;
  height: 417px;
  flex: none;
  border: 1px solid #c9ccd1;
  background: #ededed;
  box-shadow: 0 1px 3px rgba(0, 0, 0, .15);
}
.slide > div { position: absolute; }
.slide-frame { left: 22px; top: 22px; width: 690px; height: 372px; border: 2px solid #434343; }
.slide-tag {
  left: 44px;
  top: 0;
  width: 40px;
  height: 60px;
  padding-left: 7px;
  background: #fff;
  color: #434343;
  font: 900 28px/58px Inter, sans-serif;
}
.problem {
  left: 77px;
  top: 0;
  width: 655px;
  height: 134px;
  padding: 2px 0 0 30px;
  background: #fff;
  color: #333;
  font: 20px/24px "Liberation Serif", serif;
}
.problem sup { font-size: 15px; line-height: 0; vertical-align: 7px; }
.problem p { font-size: 19px; white-space: nowrap; }
.choices { display: grid; grid-template-columns: repeat(3, 159px) 1fr; padding-top: 5px; line-height: 36px; }
.choices b { display: inline-block; width: 24px; font: bold 18px "Open Sans", sans-serif; color: #222; }
.choices i { margin: 0 9px; font-style: normal; }
.answers {
  left: 0;
  top: 137px;
  width: 363px;
  height: 211px;
  padding: 8px;
  display: flex;
  background: #ff0;
  color: #000;
  font: 22px Lato, sans-serif;
}
.answers div { width: 163px; }
.answers h2 { margin-bottom: 22px; font-size: 22px; line-height: 24px; font-weight: bold; }
.answers p { line-height: 38px; font-weight: 300; }
.upload {
  left: 363px;
  top: 137px;
  width: 458px;
  height: 270px;
  padding: 5px 7px;
  background: #6d9eeb;
  color: #1a2436;
  font: 15px/20px Lato, sans-serif;
}
.dashes { position: absolute; left: 0; top: 0; overflow: visible; }

.splitter {
  height: 10px;
  flex: none;
  display: flex;
  align-items: center;
  justify-content: center;
  gap: 4px;
  border: solid #dadce0;
  border-width: 1px 0;
}
.splitter i { width: 4px; height: 4px; border-radius: 2px; background: #c4c7cb; }
.notes {
  height: 80px;
  flex: none;
  display: flex;
  justify-content: space-between;
  align-items: flex-start;
  padding: 10px 16px 6px;
  font: 15px/18px "Liberation Sans", sans-serif;
  color: #000;
}
.explore {
  width: 38px;
  height: 38px;
  align-self: flex-end;
  border: 1px solid #dadce0;
  border-radius: 3px;
  background: #fafafa;
}

.sidepanel {
  width: 56px;
  flex: none;
  display: flex;
  flex-direction: column;
  align-items: center;
  border-left: 1px solid #dadce0;
}
.sidepanel button { width: 40px; height: 56px; }
.sidepanel .expand { margin-top: auto; }
.cal { font: bold 8px Roboto, sans-serif; fill: #4285f4; text-anchor: middle; }

/* Taskbar */
.taskbar {
  height: 40px;
  flex: none;
  display: flex;
  background: linear-gradient(90deg, #ecdccb 0, #dad6cf 30%, #dcd4ca 50%, #e6d6c8 62%, #e4dccd 80%, #e5d8c5 90%, #dcd8d0);
}
.start { width: 48px; }
.search {
  width: 344px;
  padding-left: 11px;
  display: flex;
  align-items: center;
  gap: 10px;
  background: #fff;
  border: 1px solid #b5b2ad;
}
.search input {
  flex: 1;
  min-width: 0;
  padding: 0;
  border: 0;
  outline: 0;
  background: none;
  font: 14px "Noto Sans", sans-serif;
}
.search input::placeholder { color: #333; opacity: 1; }
.sys { width: 48px; }
.apps { display: flex; margin-left: 3px; }
.apps button { width: 49px; }
.apps .running { background: #f5efea; border-bottom: 2px solid #0067c0; }
.tray { margin-left: auto; display: flex; align-items: center; }
.tray button { width: 24px; height: 40px; }
.clock {
  width: 64px;
  display: flex;
  flex-direction: column;
  align-items: center;
  font: 11px/19px "Noto Sans", sans-serif;
  white-space: nowrap;
}
.tray .notify { width: 48px; margin-right: 4px; padding-right: 10px; position: relative; border-right: 1px solid #b5b2ad; }
.count {
  position: absolute;
  right: 12px;
  bottom: 5px;
  width: 16px;
  height: 16px;
  border: 1px solid #777;
  border-radius: 8px;
  background: #dcd6cc;
  font: 11px/14px "Noto Sans", sans-serif;
}
```
